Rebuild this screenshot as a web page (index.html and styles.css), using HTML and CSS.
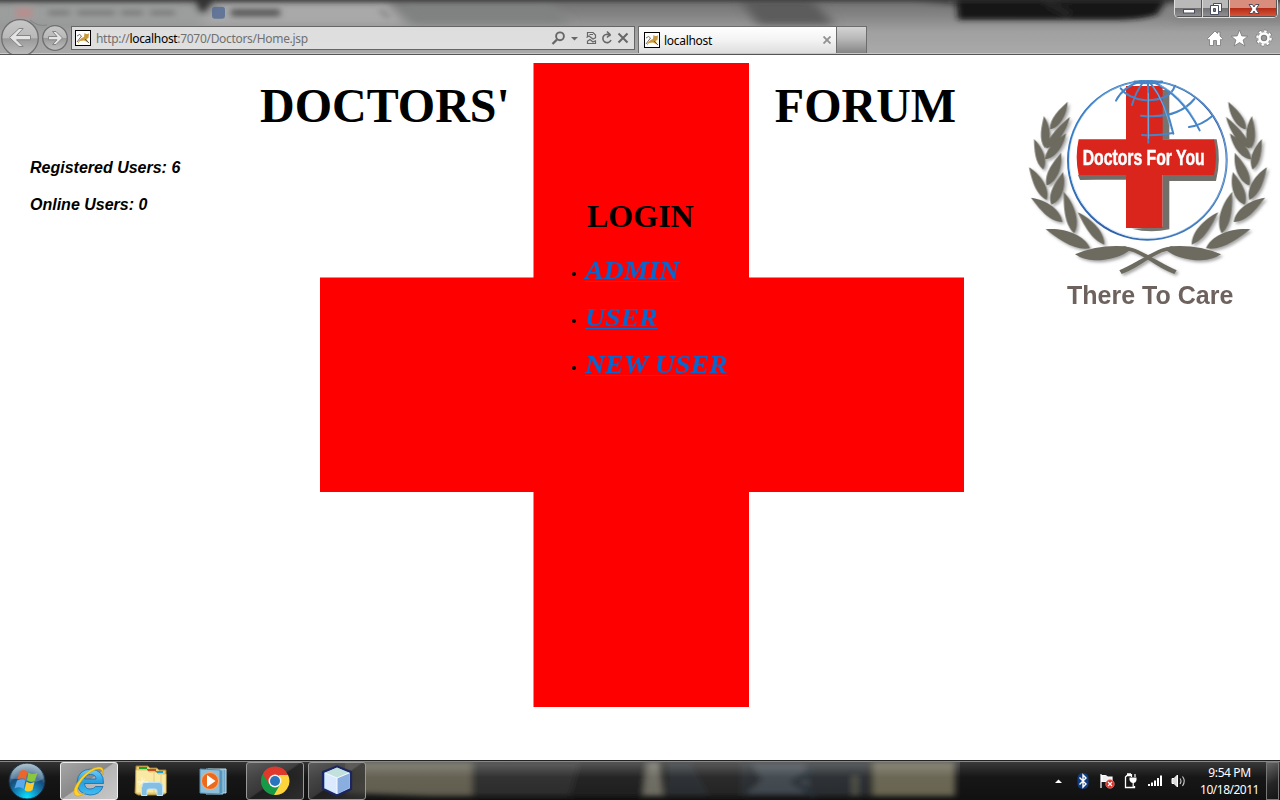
FILE: index.html
```html
<!DOCTYPE html>
<html lang="en">
<head>
<meta charset="utf-8">
<title>localhost</title>
<link rel="stylesheet" href="styles.css">
</head>
<body>
<header class="chrome">
  <svg class="glass" viewBox="0 0 1280 54" preserveAspectRatio="none">
    <defs>
      <filter id="blur" x="-5%" y="-50%" width="110%" height="200%"><feGaussianBlur stdDeviation="6 4"/></filter>
      <filter id="soft" filterUnits="userSpaceOnUse" x="-20" y="-20" width="1320" height="100"><feGaussianBlur stdDeviation="3 2.500"/></filter>
      <linearGradient id="glassBase" x1="0" y1="0" x2="0" y2="1"><stop offset="0" stop-color="#707070"/><stop offset=".3" stop-color="#858585"/><stop offset=".6" stop-color="#a0a0a0"/><stop offset="1" stop-color="#a9a9a9"/></linearGradient>
    </defs>
    <rect width="1280" height="54" fill="url(#glassBase)"/>
    <g filter="url(#blur)">
      <path d="M-10 3H195L210 26H-10z" fill="#9c9e9e"/>
      <path d="M215 3H390L405 26H200z" fill="#a9a9a9"/>
      <path d="M400 4H550L570 24H412z" fill="#808282"/>
      <path d="M740 0H812L835 25H758z" fill="#5c5c5c"/>
      <path d="M915 0H1180V3H960z" fill="#151515"/>
      <path d="M1165 5H1290V22H1175z" fill="#858585"/>
    </g>
    <g filter="url(#soft)">
      <path d="M956 -8H1170L1157 15Q1140 20 1120 20H958z" fill="#171717"/>
      <path d="M1045 0L1070 16" stroke="#242424" stroke-width="10"/>
      <path d="M-10 -4H1290V1H-10z" fill="#333"/>
      <path d="M193 -6H218L202 14z" fill="#333"/>
      <rect x="16" y="8" width="16" height="10" fill="#b68f8d"/>
      <path d="M48 13H175" stroke="#808080" stroke-width="6" stroke-dasharray="22 7 38 6"/>
      <path d="M231 13H280" stroke="#606060" stroke-width="8"/>
      <path d="M380 10l9 8" stroke="#888" stroke-width="4"/>
    </g>
    <rect x="212" y="7" width="13" height="12" rx="3" fill="#4c6593" opacity=".75"/>
  </svg>
  <div class="caption-buttons">
    <div class="cap cap-min"><svg width="14" height="16" viewBox="0 0 14 16"><rect x="1.500" y="8.500" width="11" height="3.500" fill="#fff" stroke="#4b4d60"/></svg></div>
    <div class="cap cap-max"><svg width="14" height="16" viewBox="0 0 14 16"><path d="M4.500 2.500H12.500V10.500H4.500z" fill="#fff" stroke="#4b4d60"/><path d="M1.500 4.500H9.500V13.500H1.500z" fill="#fff" stroke="#4b4d60"/><path d="M4.500 7.500h2v3h-2z" fill="#77798a" stroke="#4b4d60"/></svg></div>
    <div class="cap cap-close"><svg width="14" height="16" viewBox="0 0 14 16"><path d="M2 3.500H5.500L7 6L8.500 3.500H12L9 8L12 12.500H8.500L7 10L5.500 12.500H2L5 8z" fill="#fff" stroke="#524c5d"/></svg></div>
  </div>
  <div class="toolbar">
    <svg class="nav" width="71" height="36" viewBox="0 18 71 36">
      <defs><linearGradient id="nb" x1="0" y1="0" x2="0" y2="1"><stop offset="0" stop-color="#c7c7c7"/><stop offset=".5" stop-color="#b9b9b9"/><stop offset=".52" stop-color="#999"/><stop offset="1" stop-color="#c0c0c0"/></linearGradient></defs>
      <path d="M30 20Q38 27 47 25" fill="none" stroke="#858585"/>
      <circle cx="20" cy="38" r="18.300" fill="url(#nb)" stroke="#6f6f6f" stroke-width="1.300"/>
      <circle cx="55" cy="38" r="12.300" fill="url(#nb)" stroke="#6f6f6f" stroke-width="1.300"/>
      <path d="M9.500 37.500L19 28.500H23.200L16.500 35.500H30.500V39.800H16.500L23.200 46.500H19z" fill="#e4e4e4" stroke="#858585" stroke-width="1"/>
      <path d="M62.500 38L56 31.500H52.500L57 36.500H48.500V39.800H57L52.500 44.500H56z" fill="#e4e4e4" stroke="#858585" stroke-width="1"/>
    </svg>
    <div class="address">
      <svg class="favicon" width="16" height="16" viewBox="0 0 16 16"><rect x=".5" y=".5" width="15" height="15" fill="#fff" stroke="#000"/><path d="M3 12.500Q5 8 9 7L9.500 3L11 4H13L14 3L13.500 8L11.500 9L14 13L9 10.500L5 11L3 13.500z" fill="#c99a3b"/><path d="M2 6Q5 3 6.500 6L3.500 10L2 12M10 9L14 13" fill="none" stroke="#554b3d" stroke-width=".8"/></svg>
      <span class="url">http://<b>localhost</b>:7070/Doctors/Home.jsp</span>
      <svg class="address-icons" width="84" height="22" viewBox="550 27 84 22" fill="none" stroke="#676767">
        <circle cx="560" cy="36.300" r="3.900" stroke-width="1.900"/><path d="M557 39.500L552.500 44" stroke-width="2.300"/>
        <path d="M571 37H578L574.500 40.500z" fill="#676767" stroke="none"/>
        <path d="M587.500 37V32.500H593L595.500 35V37.500M587.500 41.500V43.500H595.500V41M586.500 37.500L589 36L593 39L596 37.500M587 41.500L590 39.500L593 42L596 40.500M589.500 34.500H593" stroke-width="1.200"/>
        <path d="M610.500 36A4.200 4.200 0 1 0 611 40M606.500 34.500H610.500M607 31.500L610 34.500L607 37.500" stroke-width="1.600"/>
        <path d="M618.500 33.500L627.500 42.500M627.500 33.500L618.500 42.500" stroke-width="2"/>
      </svg>
    </div>
    <div class="tab">
      <svg class="favicon" width="16" height="16" viewBox="0 0 16 16"><rect x=".5" y=".5" width="15" height="15" fill="#fff" stroke="#000"/><path d="M3 12.500Q5 8 9 7L9.500 3L11 4H13L14 3L13.500 8L11.500 9L14 13L9 10.500L5 11L3 13.500z" fill="#c99a3b"/><path d="M2 6Q5 3 6.500 6L3.500 10L2 12M10 9L14 13" fill="none" stroke="#554b3d" stroke-width=".8"/></svg>
      <span class="tab-title">localhost</span>
      <svg width="8" height="8" viewBox="0 0 8 8"><path d="M.5 .5L7.500 7.500M7.500 .5L.5 7.500" stroke="#929292" stroke-width="1.900"/></svg>
    </div>
    <div class="new-tab"></div>
    <svg class="tools" width="70" height="18" viewBox="1206 29 70 18" fill="#fff" stroke="#777" stroke-width=".8">
      <path d="M1207.500 38.500L1215 31L1217.500 33.500V32H1220V36L1222.500 38.500L1221.500 40L1220.500 39.500V45.500H1216.500V40.500H1213.500V45.500H1209.500V39.500L1208.500 40z"/>
      <path d="M1239.500 30L1241.800 35.900L1247.800 36.200L1243.100 40L1244.800 46L1239.500 42.600L1234.200 46L1235.900 40L1231.200 36.200L1237.200 35.900z"/>
      <circle cx="1264" cy="38" r="6.700" fill="none" stroke="#777" stroke-width="3.600" stroke-dasharray="2.900 2.350"/><circle cx="1264" cy="38" r="6.600" fill="none" stroke="#fff" stroke-width="2.400" stroke-dasharray="2.500 2.680"/>
      <circle cx="1264" cy="38" r="4.500" fill="none" stroke="#fff" stroke-width="2.500"/><circle cx="1264" cy="38" r="2.700" fill="#999"/>
    </svg>
  </div>
</header>

<main class="page">
  <svg class="cross" width="648" height="648" viewBox="318 61 648 648"><path d="M533.500 63H749V277.500H964V492H749V707H533.500V492H320V277.500H533.500z" fill="red"/></svg>
  <section class="stats">
    <p>Registered Users: 6</p>
    <p>Online Users: 0</p>
  </section>
  <section class="center">
    <h1><span>DOCTORS'</span><span>FORUM</span></h1>
    <h2>LOGIN</h2>
    <ul>
      <li><a href="#">ADMIN</a></li>
      <li><a href="#">USER</a></li>
      <li><a href="#">NEW USER</a></li>
    </ul>
  </section>
  <svg class="logo" width="260" height="250" viewBox="0 0 780 750">
    <defs>
      <path id="leaf" d="M0 0C.3 .08 .72 .2 1 0C.8 -.22 .35 -.2 0 0"/>
      <filter id="shade"><feDropShadow dx="6" dy="6" stdDeviation="4" flood-color="#777" flood-opacity=".65"/></filter>
      <g id="branch" fill="#6d6a5e">
        <use href="#leaf" transform="matrix(-53 83 -83 -53 143 95)"/>
        <use href="#leaf" transform="matrix(-72 95 -73 -58 150 140)"/>
        <use href="#leaf" transform="matrix(3 97 -100 3 72 138)"/>
        <use href="#leaf" transform="matrix(-63 78 -78 -63 138 190)"/>
        <use href="#leaf" transform="matrix(28 92 -92 28 42 207)"/>
        <use href="#leaf" transform="matrix(-43 98 -105 -43 123 248)"/>
        <use href="#leaf" transform="matrix(53 98 -98 53 27 292)"/>
        <use href="#leaf" transform="matrix(-35 98 -115 -40 129 306)"/>
        <use href="#leaf" transform="matrix(94 73 -73 94 33 383)"/>
        <use href="#leaf" transform="matrix(32 125 -115 30 131 365)"/>
        <use href="#leaf" transform="matrix(133 57 -53 124 77 478)"/>
        <use href="#leaf" transform="matrix(80 97 -83 68 173 427)"/>
        <path d="M165 553Q235 523 315 529L335 536Q295 570 225 571Q190 570 165 553z"/>
        <path d="M310 529C360 533 400 570 470 601L463 612C405 590 370 551 326 542z"/>
      </g>
      <linearGradient id="ring" x1="0" y1="0" x2="1" y2="1"><stop offset="0" stop-color="#3c86cc"/><stop offset=".6" stop-color="#305fa8"/><stop offset="1" stop-color="#4e8bce"/></linearGradient>
    </defs>
    <g filter="url(#shade)"><use href="#branch"/><use href="#branch" transform="translate(768 0) scale(-1 1)"/></g>
    <path d="M425 60H448V208H425zM580 208H590Q604 270 588 333H448V478Q390 490 335 476L430 470V315L180 330L174 315H580z" fill="#77736f"/>
    <path d="M176 208H318V48H428V208H582Q594 262 582 315H428V474H318V315H176Q164 262 176 208z" fill="#da251d"/>
    <path d="M176 315H318V329H182zM428 315H590L586 331H447V474H428z" fill="#716e6a"/>
    <circle cx="382" cy="271" r="238" fill="none" stroke="url(#ring)" stroke-width="6"/>
    <circle cx="384" cy="269" r="236" fill="none" stroke="#a9d3ef" stroke-width="1.500"/>
    <g fill="none" stroke="#4685c8" stroke-width="6" stroke-linecap="round">
      <path d="M384 34L385 218"/><path d="M365 33Q310 49 288 92"/><path d="M372 33Q347 65 336 105"/><path d="M388 35Q440 100 460 191"/><path d="M393 33Q485 72 539 181"/><path d="M302 55Q325 85 375 91Q450 92 465 47"/><path d="M363 137Q474 148 523 87"/><path d="M366 195Q410 198 459 189"/><path d="M507 171Q545 166 577 138"/><path d="M345 36Q380 40 425 36" stroke-width="9"/>
      <path d="M385 70V205M400 50Q435 102 451 176M420 45Q485 75 525 150" stroke="#8bc1eb" stroke-width="2"/>
    </g>
    <text class="logo-name" x="188" y="285" textLength="366" lengthAdjust="spacingAndGlyphs">Doctors For You</text>
    <text class="logo-tag" x="141" y="701" textLength="499" lengthAdjust="spacingAndGlyphs">There To Care</text>
  </svg>
</main>

<footer class="taskbar">
  <svg class="task-glass" viewBox="0 0 1280 38" preserveAspectRatio="none">
    <defs><linearGradient id="sheen" x1="0" y1="0" x2="0" y2="1"><stop offset="0" stop-color="#fff" stop-opacity=".26"/><stop offset=".4" stop-color="#fff" stop-opacity=".04"/><stop offset="1" stop-color="#fff" stop-opacity="0"/></linearGradient></defs>
    <rect width="1280" height="38" fill="#111"/>
    <g filter="url(#soft)">
      <path d="M345 0H486V34H430L345 31z" fill="#5f5c4e"/>
      <path d="M472 0H645V34H472z" fill="#292929"/>
      <path d="M580 0H645V34H570z" fill="#1d1d1a"/>
      <path d="M647 0H660L664 34H643z" fill="#6b695f"/>
      <path d="M666 0H870V34H666z" fill="#282c2d"/>
      <path d="M690 0H740V34H710z" fill="#202324"/>
      <path d="M752 2H805L810 32H746L762 18z" fill="#3c444b"/>
      <path d="M815 6L795 20L815 34" fill="none" stroke="#262e36" stroke-width="6"/>
      <path d="M855 14V34" stroke="#555349" stroke-width="5"/>
      <path d="M872 0H955V34H872z" fill="#66624f"/>
    </g>
    <rect width="1280" height="38" fill="url(#sheen)"/>
    <rect x="0" width="345" height="38" fill="#111" opacity=".45"/><rect x="960" width="320" height="38" fill="#111" opacity=".35"/>
  </svg>
  <div class="launch start">
    <svg width="38" height="38" viewBox="0 0 38 38">
      <defs><radialGradient id="orb" cx=".5" cy=".95" r=".9"><stop offset="0" stop-color="#08e3ff"/><stop offset=".35" stop-color="#1589bd"/><stop offset=".65" stop-color="#174b79"/><stop offset="1" stop-color="#90aab9"/></radialGradient></defs>
      <circle cx="19" cy="19" r="18" fill="url(#orb)" stroke="#182e42" stroke-width="1"/><path d="M3 17A16 15 0 0 1 35 17Q27 22 19 19Q10 16 3 17z" fill="#fff" opacity=".23"/>
      <path d="M11.500 9.500Q15.500 6.500 19.500 9.500L17.700 17.500Q14 15 9.500 17.500z" fill="#ef642a"/><path d="M20.500 10.500Q24.500 13.500 29.500 10.500L27 18.500Q23 21 19 18z" fill="#8ac73f"/><path d="M9 18.500Q14 16 17.500 18.500L15.500 27Q12 24 6.500 26.500z" fill="#5ba8eb"/><path d="M18.500 19.500Q22 22.500 26.500 20L24.500 28Q20 31 16.500 28z" fill="#fdc82c"/>
    </svg>
  </div>
  <div class="launch task active">
    <svg width="34" height="36" viewBox="0 0 34 36">
      <defs><linearGradient id="ieb" x1="0" y1="0" x2="0" y2="1"><stop offset="0" stop-color="#70d1fc"/><stop offset=".5" stop-color="#279fe0"/><stop offset="1" stop-color="#42bdf0"/></linearGradient></defs>
      <path fill-rule="evenodd" d="M31.500 20.500H12.500Q13 26 18 26Q22 26 23.500 23.500H31Q28 32 18 32Q5 31 5 19Q6 7 18.500 6Q32 7 31.500 20.500zM12.500 16H24Q24 11.500 18.500 11.500Q13.500 11.500 12.500 16z" fill="url(#ieb)" stroke="#166bb0" stroke-width=".8"/>
      <path d="M31 12Q33 3 26 4Q18 5 9 15Q-1 27 3 32Q6 35 13 30Q7 32 6 29Q4 25 11 16Q20 6 27 6Q31 6 31 12z" fill="#ffd326" stroke="#d69706" stroke-width=".5"/>
    </svg>
  </div>
  <div class="launch task plain">
    <svg width="34" height="34" viewBox="0 0 34 34">
      <path d="M2 2H14L16 4H23L25 6H32V29L29 31H4L1 29z" fill="#e9cd72" stroke="#9b782c"/><path d="M5 3H13V5H5z" fill="#14a529"/><path d="M13 5H22V7H13z" fill="#c34d24"/><path d="M21 7H29V9H21z" fill="#1c9bd7"/><path d="M2 6H13L15 8H22L24 10H32V29H2z" fill="#f9e9a4" stroke="#d8ba62" stroke-width=".7"/><path d="M20 9V29M27 11V29" stroke="#dfc57a" stroke-width=".8"/>
      <path d="M7.500 31.500V22Q7.500 18.500 11 18.500H25Q28.500 18.500 28.500 22V31.500H23V27Q23 25 21 25H15Q13 25 13 27V31.500z" fill="#84bee2" stroke="#bde4f8"/><path d="M8 13V23M3 18H14M5 21L11 15" stroke="#fff" opacity=".65"/>
    </svg>
  </div>
  <div class="launch task plain">
    <svg width="30" height="34" viewBox="0 0 30 34">
      <path d="M10 5L28 5V29L10 28z" fill="#70a7ca" stroke="#c1e1ef"/><path d="M8 5L25 6V30H8z" fill="#5a97bb" stroke="#9ccce2"/><path d="M2 5L22 6V30L2 29z" fill="#8ec0dc" stroke="#518eb5"/>
      <circle cx="12" cy="17" r="8.500" fill="#ed6a1c" stroke="#ffad72"/><path d="M9 11L17.500 17L9 23z" fill="#fff"/>
    </svg>
  </div>
  <div class="launch task open">
    <svg width="30" height="30" viewBox="0 0 30 30">
      <circle cx="15" cy="15" r="14" fill="#159b46"/><path d="M2.800 8A14 14 0 0 1 28 9H15L9 18z" fill="#de392c"/><path d="M28 9A14 14 0 0 1 14 29L21 17L19 9z" fill="#ffd33c"/><circle cx="15" cy="15" r="6.500" fill="#f6f6f6"/><circle cx="15" cy="15" r="5" fill="#2874bd"/>
    </svg>
  </div>
  <div class="launch task open second">
    <svg width="32" height="32" viewBox="0 0 32 32">
      <path d="M16 1.500L30 7V24L16 30.500L2 24V7z" fill="#afcff0" stroke="#1c255f" stroke-width="2.300" stroke-linejoin="round"/><path d="M16 2.500L28 8L16 13L4 8z" fill="#c3e1dc"/><path d="M4 8L16 13V29L4 23z" fill="#dbeaff"/><path d="M16 13L28 8V23L16 29z" fill="#8baee0"/><path d="M4 8L16 13L28 8M16 13V29" fill="none" stroke="#f7fbff"/>
    </svg>
  </div>
  <svg class="tray" width="140" height="24" viewBox="1050 769 140 24">
    <path d="M1055 783L1058.500 779.500L1062 783z" fill="#fff"/>
    <rect x="1077.500" y="773" width="11" height="16" rx="5" fill="#123c82"/><path d="M1079.500 777.500L1086 784L1083 787V775L1086 778L1079.500 784.500" fill="none" stroke="#fff" stroke-width="1.400"/>
    <path d="M1101 774V788M1102 775.500H1105Q1106.500 775.500 1107.500 777H1112V783H1108L1106 781.500H1102z" stroke="#fff" stroke-width="1.200" fill="#eee"/><circle cx="1110" cy="784" r="4.200" fill="#d42b24" stroke="#ef8175" stroke-width=".8"/><path d="M1108 782L1112 786M1112 782L1108 786" stroke="#fff" stroke-width="1.300"/>
    <path d="M1132 775.500H1127L1125.500 777V787.500H1134.500V786M1127 774H1131" fill="none" stroke="#fff" stroke-width="1.300"/><path d="M1129.500 777.500H1136.500V780Q1136 783 1133.200 783T1129.500 780z" fill="#fff"/><path d="M1131.500 777V774M1135 777V774M1133.200 782V787" stroke="#fff" stroke-width="1.200"/>
    <path d="M1149 786V784M1152 786V782.500M1155 786V780.500M1158 786V778M1161 786V775.500" stroke="#fff" stroke-width="2"/>
    <path d="M1172 778.500H1174L1177.500 775V787L1174 783.500H1172z" fill="#ddd" stroke="#fff"/><path d="M1180 778.500Q1182 781 1180 784M1182.500 776.500Q1186 781 1182.500 786" fill="none" stroke="#ccc" stroke-width="1.100"/>
  </svg>
  <div class="clock"><span class="time">9:54 PM</span><span class="date">10/18/2011</span></div>
  <div class="show-desktop"></div>
</footer>
</body>
</html>
```
FILE: styles.css
```css
* { box-sizing: border-box; }
body {
  margin: 0;
  width: 1280px;
  height: 800px;
  overflow: hidden;
  background: #fff;
  display: flex;
  flex-direction: column;
}
svg { display: block; flex: none; }

/* Browser frame */
.chrome {
  position: relative;
  height: 55px;
  flex: none;
  border-bottom: 1px solid #555;
  display: flex;
  flex-direction: column;
  justify-content: space-between;
  font-family: "Noto Sans", "Open Sans", sans-serif;
  font-size: 12px;
  box-shadow: inset 0 -1px #c8c8c8;
}
.glass { position: absolute; inset: 0; width: 1280px; height: 53px; }
.caption-buttons {
  position: relative;
  align-self: flex-end;
  margin-right: 2px;
  height: 18px;
  width: 104px;
  display: flex;
  border: 1px solid #ddd;
  border-top: 0;
  border-radius: 0 0 5px 5px;
  overflow: hidden;
}
.cap {
  display: flex;
  align-items: center;
  justify-content: center;
  background: linear-gradient(#b9b9ba 0 45%, #727274 50%, #929294);
  border-right: 1px solid #ddd;
  box-shadow: inset -1px -1px #555;
}
.cap-min { width: 28px; }
.cap-max { width: 27px; }
.cap-close { flex: 1; border-right: 0; background: linear-gradient(#d98d7c 0 45%, #b52c17 50%, #d95b3e); }
.toolbar { position: relative; display: flex; align-items: flex-start; height: 36px; }
.address {
  display: flex;
  align-items: center;
  width: 564px;
  height: 24px;
  margin-top: 8px;
  padding-left: 3px;
  background: rgba(233, 233, 233, .85);
  border: 1px solid #666;
}
.url { flex: 1; margin-left: 5px; color: #707070; white-space: nowrap; letter-spacing: -.31px; }
.url b { color: #000; font-weight: 400; }
.tab {
  display: flex;
  align-items: center;
  width: 199px;
  height: 27px;
  margin: 8px 0 0 3px;
  padding: 0 5px;
  border: 1px solid #6d6d6d;
  border-bottom: 0;
  background: linear-gradient(#fff, #f3f3f3 50%, #dedede);
}
.tab-title { flex: 1; margin-left: 4px; color: #000; letter-spacing: -.3px; }
.new-tab {
  width: 30px;
  height: 27px;
  margin-top: 8px;
  border: 1px solid #6d6d6d;
  border-width: 1px 1px 0 0;
  background: linear-gradient(#d4d4d4, #b8b8b8 45%, #858585);
}
.tools { margin: 11px 4px 0 auto; }

/* Home page */
.page { position: relative; display: flex; height: 705px; flex: none; }
.cross { position: absolute; left: 318px; top: 6px; filter: blur(.6px); }
.stats {
  width: 260px;
  padding: 104px 0 0 30px;
  font: italic bold 16px/18px "Liberation Sans", Arial, sans-serif;
}
.stats p { margin: 0 0 19px; }
.center {
  position: relative;
  width: 760px;
  padding-top: 23px;
  font-family: "Liberation Serif", "Times New Roman", serif;
}
h1 { display: flex; gap: 265px; margin: 0; font-size: 48px; line-height: 56px; }
h2 { margin: 64px 0 0 327px; font-size: 32px; line-height: 36px; }
ul { margin: 13px 0 0 312px; padding: 0; list-style: none; }
li { display: flex; align-items: center; gap: 8px; height: 47px; }
li::before { content: ""; width: 4px; height: 4px; margin-top: 6px; border-radius: 50%; background: #000; }
a {
  color: #0866cc;
  font-size: 26px;
  font-style: italic;
  font-weight: 700;
  line-height: 47px;
  text-decoration: underline;
  text-decoration-thickness: 1px;
  text-underline-offset: 2px;
  transform: scaleX(1.07);
  transform-origin: left;
  margin-left: 1px;
}
.logo { margin-top: 15px; }
.logo-name { font: bold 66px "Liberation Sans", Arial, sans-serif; fill: #fff; stroke: #fff; stroke-width: 1.5px; }
.logo-tag { font: bold 76px "Liberation Sans", Arial, sans-serif; fill: #6d625d; }

/* Taskbar */
.taskbar {
  position: relative;
  display: flex;
  align-items: center;
  height: 40px;
  flex: none;
  background: #111;
  border-top: 1px solid #232323;
  box-shadow: inset 0 1px #888;
}
.task-glass { position: absolute; left: 0; top: 1px; width: 1280px; height: 38px; }
.launch { position: relative; display: flex; align-items: center; justify-content: center; }
.start { width: 44px; margin: 0 6px 0 5px; }
.task { width: 58px; height: 38px; margin-right: 4px; border: 1px solid transparent; border-radius: 3px; }
.start + .task { margin-left: 5px; }
.active { background: linear-gradient(145deg, #a5a5a5, #898989 48%, #b5b5b5 50%, #c8c8c8); border-color: #eee; }
.open { border-color: #989898; background: linear-gradient(145deg, #707070aa, #4a4a4aaa 48%, #252525aa 51%, #3b3b3baa); }
.tray { position: relative; margin-left: auto; margin-right: 7px; }
.clock {
  position: relative;
  display: flex;
  flex-direction: column;
  align-items: center;
  width: 65px;
  color: #fff;
  font: 12px/17px "Noto Sans", "Open Sans", sans-serif;
  white-space: nowrap;
}
.time { letter-spacing: -.4px; }
.date { letter-spacing: -.5px; }
.show-desktop {
  position: relative;
  width: 13px;
  height: 38px;
  margin: 0 1px 0 4px;
  border: 1px solid #777;
  background: linear-gradient(150deg, #666, #262626 55%, #151515);
}
```
